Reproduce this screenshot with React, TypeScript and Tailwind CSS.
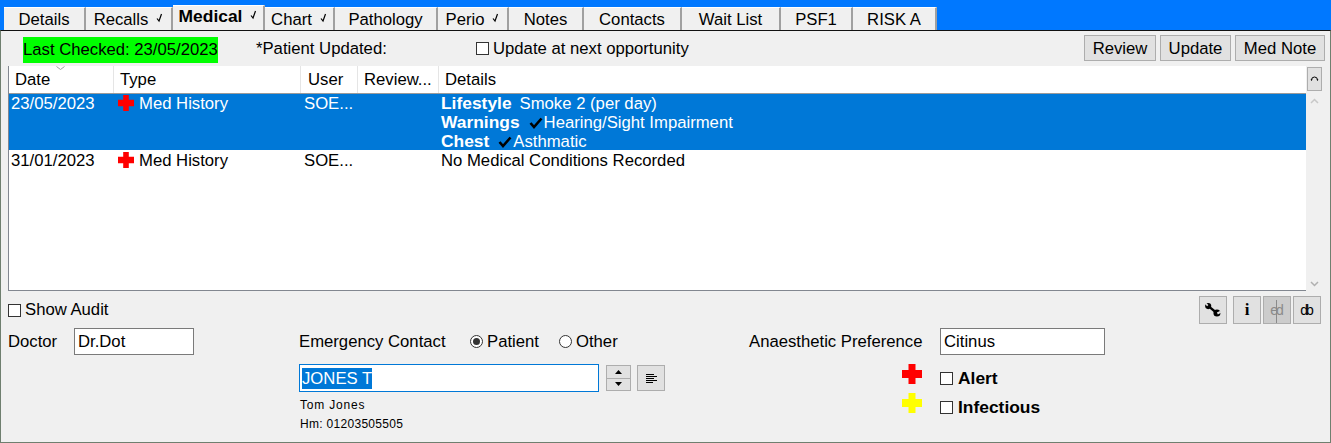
import React from 'react';

const tabs = [
  { label: 'Details', width: 'w-[82px]' },
  { label: 'Recalls', width: 'w-[87px]', tick: true },
  { label: 'Medical', width: 'w-[92px]', tick: true, active: true },
  { label: 'Chart', width: 'w-[70px]', tick: true },
  { label: 'Pathology', width: 'w-[103px]' },
  { label: 'Perio', width: 'w-[71px]', tick: true },
  { label: 'Notes', width: 'w-[75px]' },
  { label: 'Contacts', width: 'w-[98px]' },
  { label: 'Wait List', width: 'w-[99px]' },
  { label: 'PSF1', width: 'w-[72px]' },
  { label: 'RISK A', width: 'w-[84px]' },
];

const Tick = () => (
  <svg width="7" height="10" viewBox="0 0 7 10" className="shrink-0 mb-[3px]">
    <path d="M1 5.5 L3 8 L5.5 1" fill="none" stroke="#000" strokeWidth="1.2" />
  </svg>
);

const BigTick = () => (
  <svg width="14" height="12" viewBox="0 0 14 12" className="shrink-0">
    <path d="M1.5 6 L5 10 L12.5 1.5" fill="none" stroke="#000" strokeWidth="2.6" />
  </svg>
);

const Cross = ({ color, size }: { color: string; size: number }) => (
  <svg width={size} height={size} viewBox="0 0 20 20" className="shrink-0">
    <path d="M6.5 0 H13.5 V6 H20 V14 H13.5 V20 H6.5 V14 H0 V6 H6.5 Z" fill={color} />
  </svg>
);

const Check = () => <span className="block w-[13px] h-[13px] shrink-0 border border-[#333] bg-white" />;

const GrayButton = ({ label, width }: { label: string; width: string }) => (
  <button className={`h-[26px] ${width} pt-[2px] bg-[#e1e1e1] border border-[#adadad] leading-none`}>{label}</button>
);

const IconButton = ({ children, disabled }: { children: React.ReactNode; disabled?: boolean }) => (
  <div className={`w-[28px] h-[28px] flex items-center justify-center border border-[#adadad] ${disabled ? 'bg-[#cccccc]' : 'bg-[#e1e1e1]'}`}>
    {children}
  </div>
);

const App: React.FC = () => {
  return (
    <div className="w-[1331px] h-[443px] flex flex-col overflow-hidden bg-[#0078ff] font-['Liberation_Sans',sans-serif] text-[16.7px] text-black">
      {/* tab strip */}
      <div className="h-[30px] pl-[4px] flex items-end shrink-0">
        {tabs.map((t) => (
          <div
            key={t.label}
            className={`${t.width} relative flex items-center justify-center gap-[8px] border-r-2 border-r-[#a0a0a0] border-t border-t-white bg-[#f0f0f0] ${
              t.active ? 'h-[25px] pb-[3px] font-bold text-[17.4px]' : 'h-[23px] pt-[1px]'
            }`}
          >
            <span>{t.label}</span>
            {t.tick && <Tick />}
          </div>
        ))}
      </div>

      {/* panel */}
      <div className="flex-1 flex flex-col bg-[#f0f0f0] border-t border-[#111] border-x border-x-[#6f7f6f] border-b border-b-[#6f7f6f]">
        {/* status row */}
        <div className="h-[35px] flex items-start shrink-0">
          <div className="ml-[22px] mt-[6px] w-[195px] h-[26px] bg-[#00ff00] flex items-center whitespace-nowrap">Last Checked: 23/05/2023</div>
          <div className="ml-[38px] mt-[5px] w-[220px]">*Patient Updated:</div>
          <div className="mt-[5px] flex items-center gap-[4px]">
            <Check />
            <span>Update at next opportunity</span>
          </div>
          <div className="ml-auto mr-[5px] mt-[4px] flex gap-[4px]">
            <GrayButton label="Review" width="w-[72px]" />
            <GrayButton label="Update" width="w-[71px]" />
            <GrayButton label="Med Note" width="w-[90px]" />
          </div>
        </div>

        {/* list */}
        <div className="ml-[7px] mr-[8px] h-[225px] flex shrink-0">
          <div className="flex-1 flex flex-col bg-white border-l border-b border-[#828790]">
            <div className="h-[28px] grid grid-cols-[105px_187px_57px_81px_1fr] items-center border-b border-[#9a9a9a] shrink-0">
              <div className="pl-[6px] h-full flex items-center border-r border-[#e5e5e5] relative">
                Date
                <svg width="9" height="4" viewBox="0 0 9 4" className="absolute left-[47px] top-0">
                  <path d="M0.5 0.5 L4.5 3.5 L8.5 0.5" fill="none" stroke="#a0a0a0" />
                </svg>
              </div>
              <div className="pl-[6px] h-full flex items-center border-r border-[#e5e5e5]">Type</div>
              <div className="pl-[7px] h-full flex items-center border-r border-[#e5e5e5]">User</div>
              <div className="pl-[6px] h-full flex items-center border-r border-[#e5e5e5] whitespace-nowrap">Review...</div>
              <div className="pl-[6px] h-full flex items-center">Details</div>
            </div>

            <div className="h-[56px] overflow-hidden grid grid-cols-[105px_187px_57px_81px_1fr] bg-[#0078d7] text-white shrink-0">
              <div className="pl-[2px] leading-[19px]">23/05/2023</div>
              <div className="pl-[4px] flex items-start gap-[5px] leading-[19px]">
                <span className="mt-[1px]"><Cross color="#ff0000" size={16} /></span>
                Med History
              </div>
              <div className="pl-[3px] leading-[19px]">SOE...</div>
              <div />
              <div className="pl-[2px] leading-[19px]">
                <div className="flex items-center"><b className="text-[17.4px]">Lifestyle</b><span className="ml-[8px]">Smoke 2 (per day)</span></div>
                <div className="flex items-center"><b className="text-[17.4px]">Warnings</b><span className="ml-[9px] mr-[1px]"><BigTick /></span>Hearing/Sight Impairment</div>
                <div className="flex items-center"><b className="text-[17.4px]">Chest</b><span className="ml-[9px] mr-[1px]"><BigTick /></span>Asthmatic</div>
              </div>
            </div>

            <div className="h-[20px] pt-[1px] grid grid-cols-[105px_187px_57px_81px_1fr] shrink-0 leading-[19px]">
              <div className="pl-[2px]">31/01/2023</div>
              <div className="pl-[4px] flex items-start gap-[5px]">
                <span className="mt-[1px]"><Cross color="#ff0000" size={16} /></span>
                Med History
              </div>
              <div className="pl-[3px]">SOE...</div>
              <div />
              <div className="pl-[2px]">No Medical Conditions Recorded</div>
            </div>
          </div>

          {/* scrollbar */}
          <div className="w-[16px] flex flex-col items-center bg-[#f0f0f0]">
            <div className="mt-[1px] w-[15px] h-[24px] flex items-center justify-center bg-[#e1e1e1] border border-[#adadad]">
              <svg width="9" height="9" viewBox="0 0 9 9">
                <path d="M1.5 5 A3 3 0 1 1 7.5 5" fill="none" stroke="#000" strokeWidth="1" />
                <path d="M0.5 4.5 H2.5 L1.5 6 Z M6.5 4.5 H8.5 L7.5 6 Z" fill="#000" />
              </svg>
            </div>
            <svg width="9" height="6" viewBox="0 0 9 6" className="mt-[7px]">
              <path d="M1 5 L4.5 1.5 L8 5" fill="none" stroke="#c8c8c8" strokeWidth="1.5" />
            </svg>
            <svg width="9" height="6" viewBox="0 0 9 6" className="mt-auto mb-[4px]">
              <path d="M1 1 L4.5 4.5 L8 1" fill="none" stroke="#b0b0b0" strokeWidth="1.5" />
            </svg>
          </div>
        </div>

        {/* audit row */}
        <div className="ml-[7px] mr-[9px] mt-[5px] h-[28px] flex items-center shrink-0">
          <Check />
          <span className="ml-[4px]">Show Audit</span>
          <div className="ml-auto flex">
            <div className="mr-[6px]">
              <IconButton>
                <svg width="16" height="14" viewBox="0 0 18 16">
                  <path d="M3 3 L14 12" stroke="#000" strokeWidth="2.6" />
                  <circle cx="3.5" cy="3.5" r="3.5" fill="#000" />
                  <circle cx="13.5" cy="11.5" r="4" fill="#000" />
                  <path d="M0 0 L3 3" stroke="#e1e1e1" strokeWidth="2" />
                  <path d="M18 10 L14 12" stroke="#e1e1e1" strokeWidth="2.4" />
                </svg>
              </IconButton>
            </div>
            <div className="flex gap-[2px]">
              <IconButton><span className="font-['Liberation_Serif',serif] font-bold text-[17px]">i</span></IconButton>
              <IconButton disabled>
                <span className="relative text-[14px] text-[#8a8a8a] tracking-[-2px] pr-[2px]">
                  ed
                  <span className="absolute left-[6px] top-0 bottom-[-2px] w-px bg-[#8a8a8a]" />
                </span>
              </IconButton>
              <IconButton><span className="text-[14px] tracking-[-2px] pr-[2px]">db</span></IconButton>
            </div>
          </div>
        </div>

        {/* bottom form */}
        <div className="mt-[4px] flex items-start">
          <div className="ml-[7px] w-[186px] shrink-0 flex items-center">
            <span className="w-[66px]">Doctor</span>
            <div className="w-[120px] h-[27px] pl-[3px] bg-white border border-[#7a7a7a] flex items-center">Dr.Dot</div>
          </div>

          <div className="ml-[105px] w-[366px] shrink-0">
            <div className="h-[27px] flex items-center">
              <span className="w-[171px]">Emergency Contact</span>
              <span className="w-[13px] h-[13px] rounded-full border border-[#333] bg-white flex items-center justify-center">
                <span className="w-[7px] h-[7px] rounded-full bg-[#333]" />
              </span>
              <span className="ml-[4px]">Patient</span>
              <span className="ml-[20px] w-[13px] h-[13px] rounded-full border border-[#333] bg-white" />
              <span className="ml-[4px]">Other</span>
            </div>
            <div className="mt-[9px] flex items-center">
              <div className="w-[300px] h-[28px] pl-[2px] bg-white border border-[#0078d7] flex items-center">
                <span className="bg-[#0078d7] text-white leading-[21px]">JONES T</span>
              </div>
              <div className="ml-[7px] w-[25px] h-[26px] flex flex-col gap-0 border border-[#adadad] bg-[#e1e1e1]">
                <div className="flex-1 flex items-center justify-center border-b border-[#adadad]">
                  <svg width="7" height="4" viewBox="0 0 7 4"><path d="M3.5 0 L7 4 H0 Z" fill="#000" /></svg>
                </div>
                <div className="flex-1 flex items-center justify-center">
                  <svg width="7" height="4" viewBox="0 0 7 4"><path d="M0 0 H7 L3.5 4 Z" fill="#000" /></svg>
                </div>
              </div>
              <div className="ml-[6px] w-[28px] h-[26px] flex items-center justify-center border border-[#adadad] bg-[#e1e1e1]">
                <svg width="11" height="9" viewBox="0 0 11 9">
                  <path d="M0 .5 H8 M0 2.5 H11 M0 4.5 H8 M0 6.5 H11 M0 8.5 H7" stroke="#000" />
                </svg>
              </div>
            </div>
            <div className="mt-[4px] pl-[1px] text-[12px] leading-[19px] tracking-[0.3px]">
              <div className="tracking-[0.8px]">Tom Jones</div>
              <div>Hm: 01203505505</div>
            </div>
          </div>

          <div className="ml-[84px]">
            <div className="h-[27px] flex items-center">
              <span className="w-[191px] whitespace-nowrap">Anaesthetic Preference</span>
              <div className="w-[165px] h-[27px] pl-[3px] bg-white border border-[#7a7a7a] flex items-center">Citinus</div>
            </div>
            <div className="mt-[9px] flex items-start h-[20px]">
              <span className="ml-[153px]"><Cross color="#ff0000" size={20} /></span>
              <div className="ml-[18px] mt-[8px] h-[13px] flex items-center">
                <Check />
                <b className="ml-[5px] text-[17.4px]">Alert</b>
              </div>
            </div>
            <div className="mt-[9px] flex items-start h-[20px]">
              <span className="ml-[153px]"><Cross color="#ffff00" size={20} /></span>
              <div className="ml-[18px] mt-[8px] h-[13px] flex items-center">
                <Check />
                <b className="ml-[5px] text-[17.4px]">Infectious</b>
              </div>
            </div>
          </div>
        </div>
      </div>
    </div>
  );
};

export default App;
